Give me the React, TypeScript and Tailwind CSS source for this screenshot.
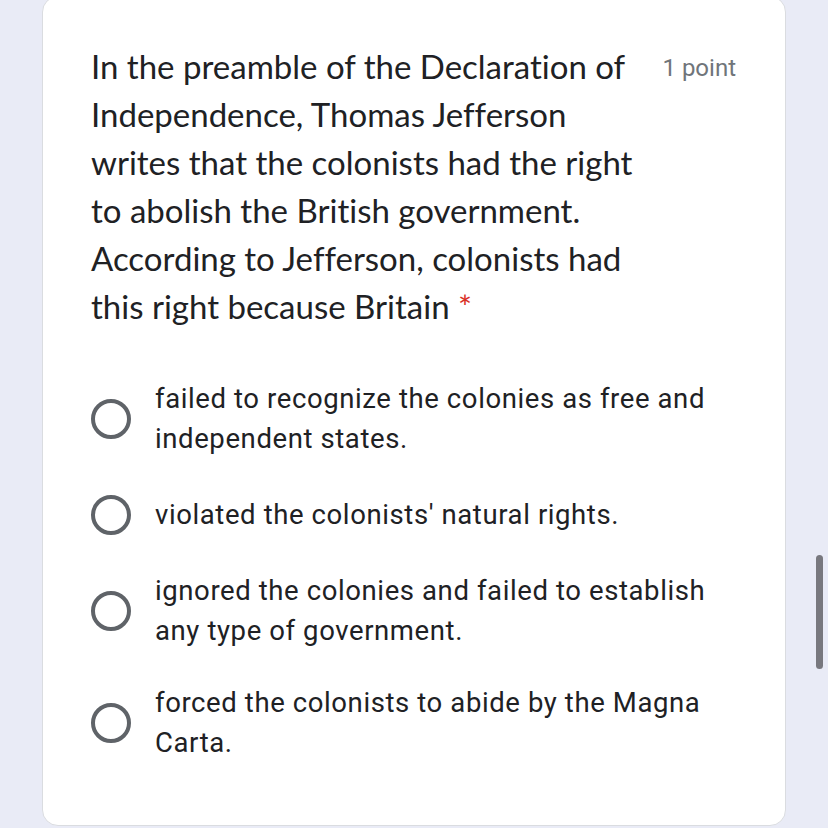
const options = [
  'failed to recognize the colonies as free and independent states.',
  "violated the colonists' natural rights.",
  'ignored the colonies and failed to establish any type of government.',
  'forced the colonists to abide by the Magna Carta.',
];

function Radio() {
  return <div className="w-10 h-10 shrink-0 rounded-full border-[4px] border-[#5f6368]" />;
}

export default function App() {
  return (
    <div className="relative w-[828px] h-[828px] overflow-hidden bg-[#e9ebf6]">
      <div className="ml-[42px] -mt-1 w-[744px] h-[830px] bg-white rounded-2xl border border-[#dadce0] pl-[48px] pr-[49px] pt-[45px]">
        <div className="flex items-start justify-between">
          <div
            className="w-[552px] text-[33px] leading-[48px] text-[#202124] [font-variant-ligatures:none]"
            style={{ fontFamily: 'Lato, "Open Sans", sans-serif' }}
          >
            In the preamble of the Declaration of Independence, Thomas Jefferson writes that the colonists had the right to abolish the British government. According to Jefferson, colonists had this right because Britain{' '}
            <span className="text-[#d93025]">*</span>
          </div>
          <div className="mt-[11px] text-[24px] leading-[30px] text-[#70757a]" style={{ fontFamily: 'Roboto, sans-serif' }}>
            1 point
          </div>
        </div>

        <div className="mt-[49px] flex flex-col gap-[36px]" style={{ fontFamily: 'Roboto, sans-serif' }}>
          {options.map((o, i) => (
            <div key={o} className={`flex items-center gap-6 ${i === 3 ? '-mt-1' : ''}`}>
              <Radio />
              <div className="w-[570px] text-[27.5px] leading-[40px] tracking-[0.6px] text-[#202124]">{o}</div>
            </div>
          ))}
        </div>
      </div>

      {/* scrollbar */}
      <div className="absolute left-[816px] top-[555px] w-[7px] h-[114px] rounded-full bg-[#78787e]" />
    </div>
  );
}
